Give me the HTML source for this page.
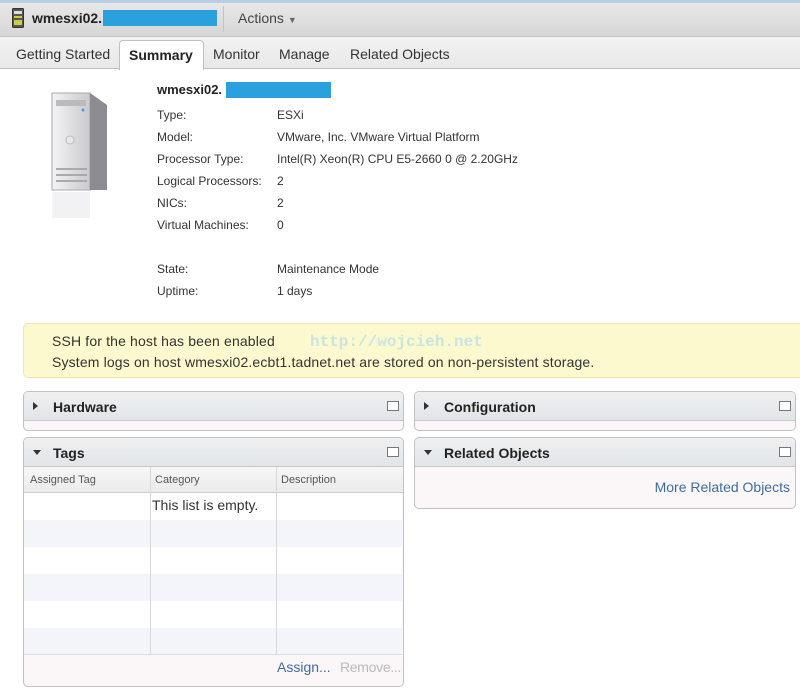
<!DOCTYPE html>
<html><head><style>
*{margin:0;padding:0;box-sizing:border-box}
body{width:800px;height:688px;overflow:hidden;background:#fff;font-family:"Liberation Sans",Arial,sans-serif;position:relative;color:#333}
.abs{position:absolute}
.top{left:0;top:0;width:800px;height:37px;background:linear-gradient(#e8e8e8,#d6d6d6);border-top:3px solid #b9cde3;border-bottom:1px solid #c4c4c4}
.tabs{left:0;top:37px;width:800px;height:32px;background:linear-gradient(#f2f2f2,#e8e8e8);border-bottom:1px solid #c0c0c0}
.tab{position:absolute;top:46px;font-size:14px;color:#333}
.lbl{font-size:12px;color:#333}
.panel{position:absolute;border:1px solid #c2c2c2;border-radius:5px;overflow:hidden;background:#fbf7f8}
.ph{height:29px;background:linear-gradient(#eef0f2,#e2e5e8);border-bottom:1px solid #c8c8c8;font-weight:bold;font-size:14px;color:#222;position:relative}
.ph span{position:absolute;left:29px;top:7px}
.ph i{position:absolute;left:9px;top:10px;width:0;height:0}
.tri-r{border-top:4px solid transparent;border-bottom:4px solid transparent;border-left:5px solid #333}
.tri-d{border-left:4px solid transparent;border-right:4px solid transparent;border-top:5px solid #333;top:12px!important}
.ph b{position:absolute;right:4px;top:9px;width:12px;height:10px;border:1px solid #777;background:#fff}
.row{position:absolute;left:0;width:378px;height:27px}
</style></head><body>
<div class="abs top"></div>
<svg class="abs" style="left:12px;top:8px" width="12" height="20"><rect x="0.5" y="0.5" width="11" height="19" rx="1" fill="#555" stroke="#333"/><rect x="2" y="3" width="8" height="3" fill="#ddd"/><rect x="2" y="8" width="8" height="2" fill="#cc4"/><rect x="2" y="12" width="8" height="5" fill="#cc4"/></svg>
<div class="abs" style="left:32px;top:10px;font-size:14px;font-weight:bold;color:#222">wmesxi02.</div>
<div class="abs" style="left:103px;top:10px;width:114px;height:16px;background:#2aa0dc"></div>
<div class="abs" style="left:223px;top:6px;width:1px;height:26px;background:#c4c4c4"></div>
<div class="abs" style="left:238px;top:10px;font-size:14px;color:#444">Actions <span style="font-size:9px;color:#666">▼</span></div>
<div class="abs tabs"></div>
<div class="abs" style="left:119px;top:40px;width:85px;height:30px;background:#fff;border:1px solid #c0c0c0;border-bottom:none;border-radius:4px 4px 0 0"></div>
<div class="tab" style="left:16px">Getting Started</div>
<div class="tab" style="left:129px;font-weight:bold;top:47px;color:#222">Summary</div>
<div class="tab" style="left:213px">Monitor</div>
<div class="tab" style="left:279px">Manage</div>
<div class="tab" style="left:350px">Related Objects</div>
<svg class="abs" style="left:50px;top:90px" width="60" height="130">
<defs><linearGradient id="g" x1="0" x2="1"><stop offset="0" stop-color="#f4f4f6"/><stop offset="1" stop-color="#c9c9ce"/></linearGradient></defs>
<polygon points="2,3 40,3 57,15 57,100 40,100 2,100" fill="#999"/>
<rect x="2" y="3" width="38" height="97" fill="url(#g)" stroke="#aaa"/>
<polygon points="40,3 57,15 57,100 40,100" fill="#8c8c92"/>
<rect x="6" y="10" width="30" height="6" fill="#bbb"/>
<circle cx="20" cy="50" r="4" fill="#e8e8e8" stroke="#bbb"/>
<circle cx="33" cy="20" r="1.5" fill="#49f"/>
<rect x="6" y="78" width="31" height="2" fill="#aaa"/><rect x="6" y="84" width="31" height="2" fill="#aaa"/><rect x="6" y="90" width="31" height="2" fill="#aaa"/>
<rect x="2" y="102" width="38" height="26" fill="#f2f2f4"/>
</svg>
<div class="abs" style="left:157px;top:82px;font-size:13px;font-weight:bold;color:#222">wmesxi02.</div>
<div class="abs" style="left:226px;top:82px;width:105px;height:16px;background:#2aa0dc"></div>
<div class="abs lbl" style="left:157px;top:104px;line-height:22px">Type:<br>Model:<br>Processor Type:<br>Logical Processors:<br>NICs:<br>Virtual Machines:<br><br>State:<br>Uptime:</div>
<div class="abs lbl" style="left:277px;top:104px;line-height:22px">ESXi<br>VMware, Inc. VMware Virtual Platform<br>Intel(R) Xeon(R) CPU E5-2660 0 @ 2.20GHz<br>2<br>2<br>0<br><br>Maintenance Mode<br>1 days</div>
<div class="abs" style="left:23px;top:323px;width:790px;height:55px;background:#fcf9cf;border:1px solid #eee7b0;border-radius:5px"></div>
<div class="abs" style="left:52px;top:331px;font-size:14px;color:#333;line-height:21px;letter-spacing:0.15px">SSH for the host has been enabled<br>System logs on host wmesxi02.ecbt1.tadnet.net are stored on non-persistent storage.</div>
<div class="abs" style="left:310px;top:333px;font-size:16px;color:#c8e4e4;font-weight:bold;font-family:'Liberation Mono',monospace">http://wojcieh.net</div>

<div class="panel" style="left:23px;top:391px;width:381px;height:40px"><div class="ph"><i class="tri-r"></i><span>Hardware</span><b></b></div></div>
<div class="panel" style="left:414px;top:391px;width:382px;height:40px"><div class="ph"><i class="tri-r"></i><span>Configuration</span><b></b></div></div>
<div class="panel" style="left:414px;top:437px;width:382px;height:72px"><div class="ph"><i class="tri-d"></i><span>Related Objects</span><b></b></div>
<div style="position:absolute;right:5px;top:41px;font-size:14px;color:#3d6ba8">More Related Objects</div></div>
<div class="panel" style="left:23px;top:437px;width:381px;height:250px"><div class="ph"><i class="tri-d"></i><span>Tags</span><b></b></div>
<div style="position:absolute;left:0;top:29px;width:379px;height:26px;background:linear-gradient(#f7f7f7,#ebebeb);border-bottom:1px solid #ccc;font-size:11px;color:#555">
<span style="position:absolute;left:6px;top:7px">Assigned Tag</span><span style="position:absolute;left:131px;top:7px">Category</span><span style="position:absolute;left:257px;top:7px">Description</span></div>
<div class="row" style="top:55px;background:#fff"></div>
<div class="row" style="top:82px;background:#f3f5fa"></div>
<div class="row" style="top:109px;background:#fff"></div>
<div class="row" style="top:136px;background:#f3f5fa"></div>
<div class="row" style="top:163px;background:#fff"></div>
<div class="row" style="top:190px;background:#f3f5fa;border-bottom:1px solid #ddd;height:27px"></div>
<div style="position:absolute;left:126px;top:29px;width:1px;height:188px;background:#d8d8dc"></div>
<div style="position:absolute;left:252px;top:29px;width:1px;height:188px;background:#d8d8dc"></div>
<div style="position:absolute;left:128px;top:59px;font-size:14px;color:#333">This list is empty.</div>
<div style="position:absolute;left:253px;top:221px;font-size:14px;color:#3d6ba8">Assign...</div>
<div style="position:absolute;left:316px;top:221px;font-size:14px;color:#bbb;letter-spacing:-0.3px">Remove...</div>
</div>
</body></html>
